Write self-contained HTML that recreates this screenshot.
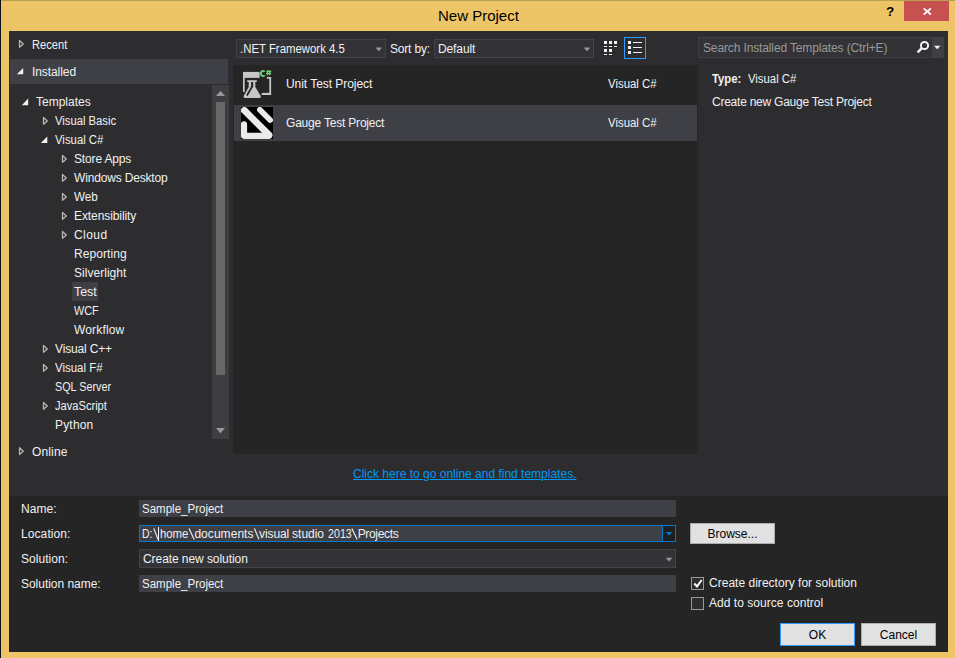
<!DOCTYPE html>
<html>
<head>
<meta charset="utf-8">
<title>New Project</title>
<style>
html,body{margin:0;padding:0;}
body{width:955px;height:658px;overflow:hidden;position:relative;background:#EEC566;font-family:"Liberation Sans",sans-serif;font-size:12px;color:#F1F1F1;}
.a{position:absolute;}
.t{position:absolute;white-space:pre;line-height:16px;height:16px;font-size:12px;color:#F1F1F1;}
.box{position:absolute;box-sizing:border-box;}
</style>
</head>
<body>
<!-- window chrome -->
<div class="a" style="left:0;top:0;width:1px;height:658px;background:#10131A;"></div>
<div class="a" style="left:1px;top:0;width:954px;height:1px;background:#B6A14F;"></div>
<div class="t" style="left:438px;top:6px;font-size:15px;line-height:20px;height:20px;color:#000;">New Project</div>
<div class="t" style="left:884px;top:3.5px;font-size:13.5px;font-weight:bold;color:#000;width:12px;text-align:center;">?</div>
<div class="a" style="left:904px;top:1px;width:45px;height:20px;background:#C75050;">
<svg class="a" style="left:0;top:0" width="45" height="20" viewBox="0 0 45 20"><path d="M19.7 7.3 L26.9 13.5 M26.9 7.3 L19.7 13.5" stroke="#fff" stroke-width="1.7" fill="none"/></svg>
</div>

<!-- client area -->
<div class="a" id="client" style="left:9px;top:31px;width:939px;height:621px;background:#2D2D30;"></div>
<div class="a" style="left:9px;top:496px;width:939px;height:156px;background:#252526;"></div>

<!-- left nav -->
<div class="a" style="left:10px;top:59px;width:218px;height:25px;background:#3F3F46;"></div>
<div class="t" style="left:32px;top:37px;transform:scaleX(0.928);transform-origin:0 0;">Recent</div>
<div class="t" style="left:32px;top:64px;letter-spacing:-0.08px;">Installed</div>
<div class="t" style="left:32px;top:444px;letter-spacing:0.14px;">Online</div>

<!-- tree scrollbar -->
<div class="a" style="left:212px;top:85px;width:17px;height:354px;background:#3E3E42;"></div>
<div class="a" style="left:216px;top:102px;width:9px;height:273px;background:#686868;"></div>
<svg class="a" style="left:212px;top:85px" width="17" height="354" viewBox="212 85 17 354"><path d="M216 96 L220.5 90.7 L225 96 Z" fill="#999"/><path d="M216 428 H225 L220.5 433.3 Z" fill="#999"/></svg>

<!-- tree -->
<div class="a" style="left:72px;top:282px;width:26px;height:19px;background:#3F3F46;"></div>
<div class="t" style="left:36px;top:94px;">Templates</div>
<div class="t" style="left:55px;top:113px;transform:scaleX(0.938);transform-origin:0 0;">Visual Basic</div>
<div class="t" style="left:55px;top:132px;transform:scaleX(0.946);transform-origin:0 0;">Visual C#</div>
<div class="t" style="left:74px;top:151px;letter-spacing:-0.15px;">Store Apps</div>
<div class="t" style="left:74px;top:170px;letter-spacing:-0.17px;">Windows Desktop</div>
<div class="t" style="left:74px;top:189px;transform:scaleX(0.973);transform-origin:0 0;">Web</div>
<div class="t" style="left:74px;top:208px;letter-spacing:-0.09px;">Extensibility</div>
<div class="t" style="left:74px;top:227px;letter-spacing:0.43px;">Cloud</div>
<div class="t" style="left:74px;top:246px;letter-spacing:0.07px;">Reporting</div>
<div class="t" style="left:74px;top:265px;letter-spacing:0.03px;">Silverlight</div>
<div class="t" style="left:74px;top:284px;transform:scaleX(1.034);transform-origin:0 0;">Test</div>
<div class="t" style="left:74px;top:303px;transform:scaleX(0.900);transform-origin:0 0;">WCF</div>
<div class="t" style="left:74px;top:322px;letter-spacing:0.16px;">Workflow</div>
<div class="t" style="left:55px;top:341px;letter-spacing:-0.16px;">Visual C++</div>
<div class="t" style="left:55px;top:360px;transform:scaleX(0.956);transform-origin:0 0;">Visual F#</div>
<div class="t" style="left:55px;top:379px;transform:scaleX(0.900);transform-origin:0 0;">SQL Server</div>
<div class="t" style="left:55px;top:398px;transform:scaleX(0.926);transform-origin:0 0;">JavaScript</div>
<div class="t" style="left:55px;top:417px;letter-spacing:0.18px;">Python</div>

<!-- toolbar -->
<div class="box" style="left:236px;top:39px;width:150px;height:19px;background:#333337;border:1px solid #434346;"></div>
<div class="t" style="left:240px;top:41px;transform:scaleX(0.949);transform-origin:0 0;">.NET Framework 4.5</div>
<div class="t" style="left:390px;top:41px;letter-spacing:-0.19px;">Sort by:</div>
<div class="box" style="left:434px;top:39px;width:160px;height:19px;background:#333337;border:1px solid #434346;"></div>
<div class="t" style="left:438px;top:41px;letter-spacing:-0.11px;">Default</div>

<!-- template list -->
<div class="a" style="left:233px;top:65px;width:465px;height:389px;background:#252526;"></div>
<div class="a" style="left:234px;top:105px;width:463px;height:36px;background:#3F3F46;"></div>
<div class="t" style="left:286px;top:76px;letter-spacing:-0.05px;">Unit Test Project</div>
<div class="t" style="left:286px;top:115px;letter-spacing:-0.2px;">Gauge Test Project</div>
<div class="t" style="left:608px;top:76px;transform:scaleX(0.952);transform-origin:0 0;">Visual C#</div>
<div class="t" style="left:608px;top:115px;transform:scaleX(0.952);transform-origin:0 0;">Visual C#</div>

<!-- search -->
<div class="box" style="left:698px;top:37px;width:246px;height:21px;background:#333337;border:1px solid #3F3F46;"></div>
<div class="a" style="left:932px;top:38px;width:11px;height:19px;background:#3F3F46;"></div>
<div class="t" style="left:703px;top:40px;color:#999999;letter-spacing:-0.13px;">Search Installed Templates (Ctrl+E)</div>

<!-- details -->
<div class="t" style="left:712px;top:71px;font-weight:bold;transform:scaleX(0.940);transform-origin:0 0;">Type:</div>
<div class="t" style="left:748px;top:71px;transform:scaleX(0.944);transform-origin:0 0;">Visual C#</div>
<div class="t" style="left:712px;top:94px;letter-spacing:-0.24px;">Create new Gauge Test Project</div>

<!-- link -->
<div class="t" style="left:353px;top:466px;color:#0097FB;text-decoration:underline;">Click here to go online and find templates.</div>

<!-- form -->
<div class="t" style="left:21px;top:501px;letter-spacing:0.08px;">Name:</div>
<div class="t" style="left:21px;top:526px;letter-spacing:0.09px;">Location:</div>
<div class="t" style="left:21px;top:551px;letter-spacing:0.04px;">Solution:</div>
<div class="t" style="left:21px;top:576px;letter-spacing:-0.03px;">Solution name:</div>
<div class="box" style="left:139px;top:500px;width:537px;height:17px;background:#3F3F46;"></div>
<div class="box" style="left:139px;top:525px;width:537px;height:17px;background:#3F3F46;border:1px solid #007ACC;"></div>
<div class="box" style="left:139px;top:549px;width:537px;height:19px;background:#333337;border:1px solid #434346;"></div>
<div class="box" style="left:139px;top:575px;width:537px;height:17px;background:#3F3F46;"></div>
<div class="t" style="left:142px;top:501px;transform:scaleX(0.960);transform-origin:0 0;">Sample_Project</div>
<div class="t" style="left:142.4px;top:526px;transform:scaleX(0.87);transform-origin:0 0;">D:</div>
<div class="t" style="left:159.6px;top:526px;transform:scaleX(0.945);transform-origin:0 0;">home</div>
<div class="t" style="left:194.4px;top:526px;letter-spacing:0.05px;">documents</div>
<div class="t" style="left:259px;top:526px;letter-spacing:-0.08px;">visual</div>
<div class="t" style="left:292.1px;top:526px;letter-spacing:-0.02px;">studio</div>
<div class="t" style="left:327.7px;top:526px;transform:scaleX(0.89);transform-origin:0 0;">2013</div>
<div class="t" style="left:357.7px;top:526px;letter-spacing:-0.34px;">Projects</div>
<div class="t" style="left:143px;top:551px;letter-spacing:-0.07px;">Create new solution</div>
<div class="t" style="left:142px;top:576px;transform:scaleX(0.960);transform-origin:0 0;">Sample_Project</div>

<!-- buttons -->
<div class="box" style="left:690px;top:523px;width:85px;height:21px;background:#E1E1E1;border:1px solid #ADADAD;"></div>
<div class="t" style="left:690px;top:526px;width:85px;text-align:center;color:#000;">Browse...</div>
<div class="box" style="left:780px;top:623px;width:75px;height:23px;background:#E1E1E1;border:1px solid #3399FF;"></div>
<div class="t" style="left:780px;top:627px;width:75px;text-align:center;color:#000;">OK</div>
<div class="box" style="left:861px;top:623px;width:75px;height:23px;background:#E1E1E1;border:1px solid #ADADAD;"></div>
<div class="t" style="left:861px;top:627px;width:75px;text-align:center;color:#000;">Cancel</div>

<!-- checkboxes -->
<div class="box" style="left:691px;top:577px;width:13px;height:13px;background:#2D2D30;border:1px solid #999;"></div>
<div class="box" style="left:691px;top:597px;width:13px;height:13px;background:#2D2D30;border:1px solid #999;"></div>
<div class="t" style="left:709px;top:575px;letter-spacing:0.02px;">Create directory for solution</div>
<div class="t" style="left:709px;top:595px;letter-spacing:0.04px;">Add to source control</div>

<!-- tree expanders -->
<svg class="a" style="left:0;top:0;pointer-events:none" width="955" height="658" viewBox="0 0 955 658">
<g id="exp" fill="#F1F1F1" stroke="none">
<path d="M23.2 67.9 V74.2 H16.9 Z"/>
<path d="M28.2 98.6 V105.2 H21.8 Z"/>
<path d="M47.3 136.4 V143 H40.8 Z"/>
</g>
<g id="col" fill="#2D2D30" stroke="#B4B4B4" stroke-width="1.3" stroke-linejoin="round">
<path d="M19.5 40.5 V47.3 L23.3 43.9 Z"/>
<path d="M19.5 447.8 V454.6 L23.3 451.2 Z"/>
<path d="M43.5 117.5 V124.3 L47.3 120.9 Z"/>
<path d="M62.5 155.5 V162.3 L66.3 158.9 Z"/>
<path d="M62.5 174.5 V181.3 L66.3 177.9 Z"/>
<path d="M62.5 193.5 V200.3 L66.3 196.9 Z"/>
<path d="M62.5 212.5 V219.3 L66.3 215.9 Z"/>
<path d="M62.5 231.5 V238.3 L66.3 234.9 Z"/>
<path d="M43.5 345.5 V352.3 L47.3 348.9 Z"/>
<path d="M43.5 364.5 V371.3 L47.3 367.9 Z"/>
<path d="M43.5 402.5 V409.3 L47.3 405.9 Z"/>
</g>
<!-- combo arrows -->
<g fill="#999999">
<path d="M375.5 47.6 H382.1 L378.8 51.2 Z"/>
<path d="M583.7 47.6 H590.3 L587 51.2 Z"/>
<path d="M665.7 557.8 H672.3 L669 561.4 Z"/>
</g>
<path d="M934 45.8 H940.4 L937.2 49.3 Z" fill="#F1F1F1"/>
<!-- small icons view -->
<g fill="#F1F1F1">
<rect x="604" y="41" width="3" height="3"/><rect x="609" y="41" width="3" height="3"/><rect x="614" y="41" width="3" height="3"/>
<rect x="604" y="46" width="3" height="1"/><rect x="609" y="46" width="3" height="1"/><rect x="614" y="46" width="3" height="1"/>
<rect x="604" y="49" width="3" height="3"/><rect x="609" y="49" width="3" height="3"/>
<rect x="604" y="54" width="3" height="1"/><rect x="609" y="54" width="3" height="1"/>
</g>
<!-- list view (selected) -->
<rect x="624.5" y="37.5" width="21" height="21" fill="#2D2D30" stroke="#3399FF" stroke-width="1"/>
<g fill="#F1F1F1">
<rect x="628" y="41" width="3" height="3"/><rect x="628" y="46" width="3" height="3"/><rect x="628" y="51" width="3" height="3"/>
<rect x="633" y="42" width="9" height="1"/><rect x="633" y="47" width="9" height="1"/><rect x="633" y="52" width="9" height="1"/>
</g>
<!-- magnifier -->
<circle cx="924.5" cy="45.5" r="3.6" fill="none" stroke="#F1F1F1" stroke-width="2"/>
<path d="M921.6 48.4 L917.6 52.4" stroke="#F1F1F1" stroke-width="2.6" stroke-linecap="butt"/>
<!-- check mark -->
<path d="M694.3 583.5 L697 586.4 L701.7 580" fill="none" stroke="#FFFFFF" stroke-width="1.9"/>
<!-- location dropdown -->
<rect x="662.5" y="525.5" width="13" height="16" fill="#1F1F20" stroke="#007ACC" stroke-width="1"/>
<path d="M665.7 532 H672.3 L669 535.6 Z" fill="#007ACC"/>
<g stroke="#F1F1F1" stroke-width="1.15" fill="none"><path d="M153.8 528.4 L158 539.4"/><path d="M189 528.4 L194.2 539.4"/><path d="M254.4 528.4 L259 539.4"/><path d="M351.8 528.4 L357.2 539.4"/></g>
<!-- text caret -->
<rect x="158" y="527" width="1" height="14" fill="#F1F1F1"/>
</svg>

<!-- unit test icon -->
<svg class="a" style="left:241px;top:68px" width="32" height="32" viewBox="0 0 32 32">
<g fill="#C6C6C6">
<rect x="2" y="3.9" width="16.6" height="6"/>
<rect x="2" y="9" width="1.7" height="15"/>
<rect x="25.9" y="9" width="4.2" height="1.7"/>
<rect x="28.3" y="9" width="1.8" height="18"/>
<rect x="20.7" y="24.9" width="9.4" height="2.1"/>
</g>
<path d="M6.2 12.3 H15.8 V14 H14.3 V19 L19.6 27.8 Q20.4 30 18.2 30 H4.2 Q2 30 2.8 27.8 L7.7 19 V14 H6.2 Z" fill="none" stroke="#252526" stroke-width="1.4" stroke-linejoin="round"/>
<path d="M6.2 12.3 H15.8 V14 H14.3 V19 L19.6 27.8 Q20.4 30 18.2 30 H4.2 Q2 30 2.8 27.8 L7.7 19 V14 H6.2 Z" fill="#C6C6C6"/>
<path d="M10.1 14 H12.2 V19.4 H10.1 Z" fill="#252526"/>
<path d="M11.1 18.6 L5.9 27.5" stroke="#252526" stroke-width="1.8" fill="none"/>
<g fill="none" stroke="#6FCC6F">
<path d="M23.7 3.6 A2.3 2.6 0 1 0 23.7 7.4" stroke-width="2"/>
<path d="M26.8 2 L26.4 7.3 M29 2 L28.6 7.3 M25.2 3.7 H30.3 M25 5.6 H30.1" stroke-width="1.3"/>
</g>
</svg>

<!-- gauge icon -->
<svg class="a" style="left:241px;top:107px" width="32" height="32" viewBox="0 0 32 32">
<rect width="32" height="32" fill="#000"/>
<g stroke="#E9EAE9" stroke-linecap="round" stroke-linejoin="round" fill="none">
<path d="M3.4 3.4 L28 28" stroke-width="6.8"/>
<path d="M18.8 2.8 L29.1 13.1" stroke-width="5.6"/>
<path d="M3.05 17.2 V28.85 H28" stroke-width="6.1"/>
</g>
</svg>
</body>
</html>
